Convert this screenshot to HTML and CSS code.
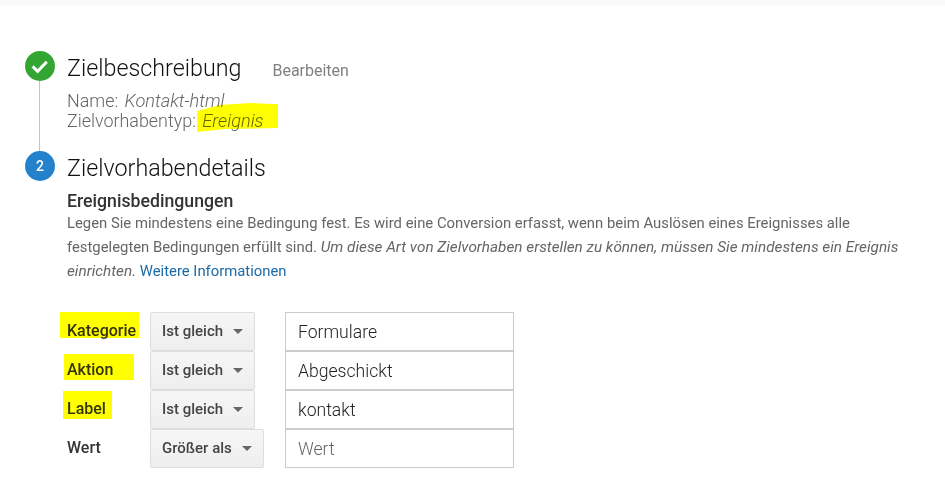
FILE: index.html
```html
<!DOCTYPE html>
<html lang="de">
  <head>
    <meta charset="UTF-8" />
    <meta name="viewport" content="width=device-width, initial-scale=1.0" />
    <title>Zielvorhaben</title>
    <link rel="stylesheet" href="styles.css">
  </head>
  <body>
    <div class="top-bar"></div>

    <div class="steps">
      <div class="step step-done">
        <div class="step-marker">
          <div class="circle circle-green">
            <svg viewBox="0 0 30 30" width="30" height="30">
              <path d="M7.6 15.4l5 5 9.2-9.6" fill="none" stroke="#fff" stroke-width="3" />
            </svg>
          </div>
          <div class="step-line"></div>
        </div>
        <div class="step-body">
          <div class="step-head">
            <h2>Zielbeschreibung</h2>
            <span class="edit">Bearbeiten</span>
          </div>
          <p class="summary">Name: <em>Kontakt-html</em></p>
          <p class="summary">Zielvorhabentyp: <em class="marked marked-type">Ereignis</em></p>
        </div>
      </div>

      <div class="step">
        <div class="step-marker">
          <div class="circle circle-blue">2</div>
        </div>
        <div class="step-body">
          <h2>Zielvorhabendetails</h2>
          <h3>Ereignisbedingungen</h3>
          <p class="info">
            Legen Sie mindestens eine Bedingung fest. Es wird eine Conversion erfasst, wenn beim Auslösen eines Ereignisses alle
            festgelegten Bedingungen erfüllt sind. <em>Um diese Art von Zielvorhaben erstellen zu können, müssen Sie mindestens ein Ereignis
            einrichten.</em> <a href="#">Weitere Informationen</a>
          </p>

          <div class="conditions">
            <label class="marked marked-cat">Kategorie</label>
            <div class="select"><span>Ist gleich</span><i class="caret"></i></div>
            <input type="text" value="Formulare" />

            <label class="marked marked-action">Aktion</label>
            <div class="select"><span>Ist gleich</span><i class="caret"></i></div>
            <input type="text" value="Abgeschickt" />

            <label class="marked marked-label">Label</label>
            <div class="select"><span>Ist gleich</span><i class="caret"></i></div>
            <input type="text" value="kontakt" />

            <label>Wert</label>
            <div class="select"><span>Größer als</span><i class="caret"></i></div>
            <input type="text" placeholder="Wert" />
          </div>
        </div>
      </div>
    </div>
  </body>
</html>
```

FILE: styles.css
```css
* {
  margin: 0;
  padding: 0;
  box-sizing: border-box;
}
body,
html {
  width: 100%;
  height: 100%;
  overflow: hidden;
  background: #fff;
  font-family: "Roboto", sans-serif;
}
.top-bar {
  height: 5px;
  background: #f8f9fa;
}
.steps {
  padding: 46px 0 0 25px;
}
.step {
  display: flex;
  gap: 12px;
}
.step-done {
  height: 100px;
}
.step-marker {
  display: flex;
  flex-direction: column;
  align-items: center;
  width: 30px;
  flex: none;
}
.step-line {
  flex: 1;
  width: 1px;
  margin-right: 1px;
  background: #c4c4c4;
}
.circle {
  width: 30px;
  height: 30px;
  border-radius: 50%;
  flex: none;
  color: #fff;
  font-size: 14px;
  font-weight: 500;
  line-height: 30px;
  text-align: center;
}
.circle svg {
  display: block;
}
.circle-green {
  background: #33a532;
}
.circle-blue {
  background: #2481cc;
}
.step-head {
  display: flex;
  align-items: baseline;
  gap: 31px;
}
h2 {
  font-size: 23.3px;
  font-weight: 300;
  line-height: 34px;
  color: #111;
}
.edit {
  font-size: 16px;
  font-weight: 400;
  color: #808080;
}
.summary {
  font-size: 17.9px;
  font-weight: 300;
  line-height: 20px;
  color: #666;
}
.summary em {
  margin-left: 2px;
  font-size: 18.2px;
}
.summary:first-of-type {
  margin-top: 6px;
}
h3 {
  font-size: 17.7px;
  font-weight: 500;
  line-height: 20px;
  color: #333;
  margin-top: 6px;
}
.info {
  width: 850px;
  font-size: 14.85px;
  line-height: 24px;
  color: #666;
}
.info em {
  font-size: 15.3px;
}
.info a {
  color: #1a6aa8;
  text-decoration: none;
}
.conditions {
  display: grid;
  grid-template-columns: 83px 135px 229px;
  grid-auto-rows: 39px;
  align-items: center;
  margin-top: 29px;
}
label {
  margin-bottom: 2px;
  font-size: 16px;
  font-weight: 500;
  color: #333;
}
.select {
  display: inline-flex;
  align-items: center;
  justify-self: start;
  gap: 10px;
  height: 39px;
  padding: 0 11px 2px;
  background: linear-gradient(#f6f6f6, #eee);
  border: 1px solid #ddd;
  border-radius: 2px;
  font-size: 15px;
  font-weight: 500;
  color: #444;
}
.caret {
  width: 0;
  height: 0;
  border-left: 5px solid transparent;
  border-right: 5px solid transparent;
  border-top: 5px solid #666;
  margin-top: 2px;
}
input {
  width: 229px;
  height: 39px;
  padding: 0 12px;
  border: 1px solid #ccc;
  outline: none;
  font-family: inherit;
  font-size: 17.6px;
  font-weight: 300;
  color: #222;
}
input::placeholder {
  color: #666;
}

/* Textmarker */
.marked {
  position: relative;
}
.marked::before {
  content: "";
  position: absolute;
  background: #ffff00;
  mix-blend-mode: multiply;
}
.marked-type::before {
  left: -5px;
  top: -7px;
  width: 81px;
  height: 29px;
  clip-path: polygon(0 28%, 28% 7%, 65% 0, 100% 4%, 100% 86%, 35% 90%, 0 100%);
}
.marked-cat::before {
  left: -7px;
  top: -9px;
  width: 79px;
  height: 26px;
}
.marked-action::before {
  left: -3px;
  top: -6px;
  width: 70px;
  height: 26px;
}
.marked-label::before {
  left: -4px;
  top: -8px;
  width: 49px;
  height: 28px;
}
```
